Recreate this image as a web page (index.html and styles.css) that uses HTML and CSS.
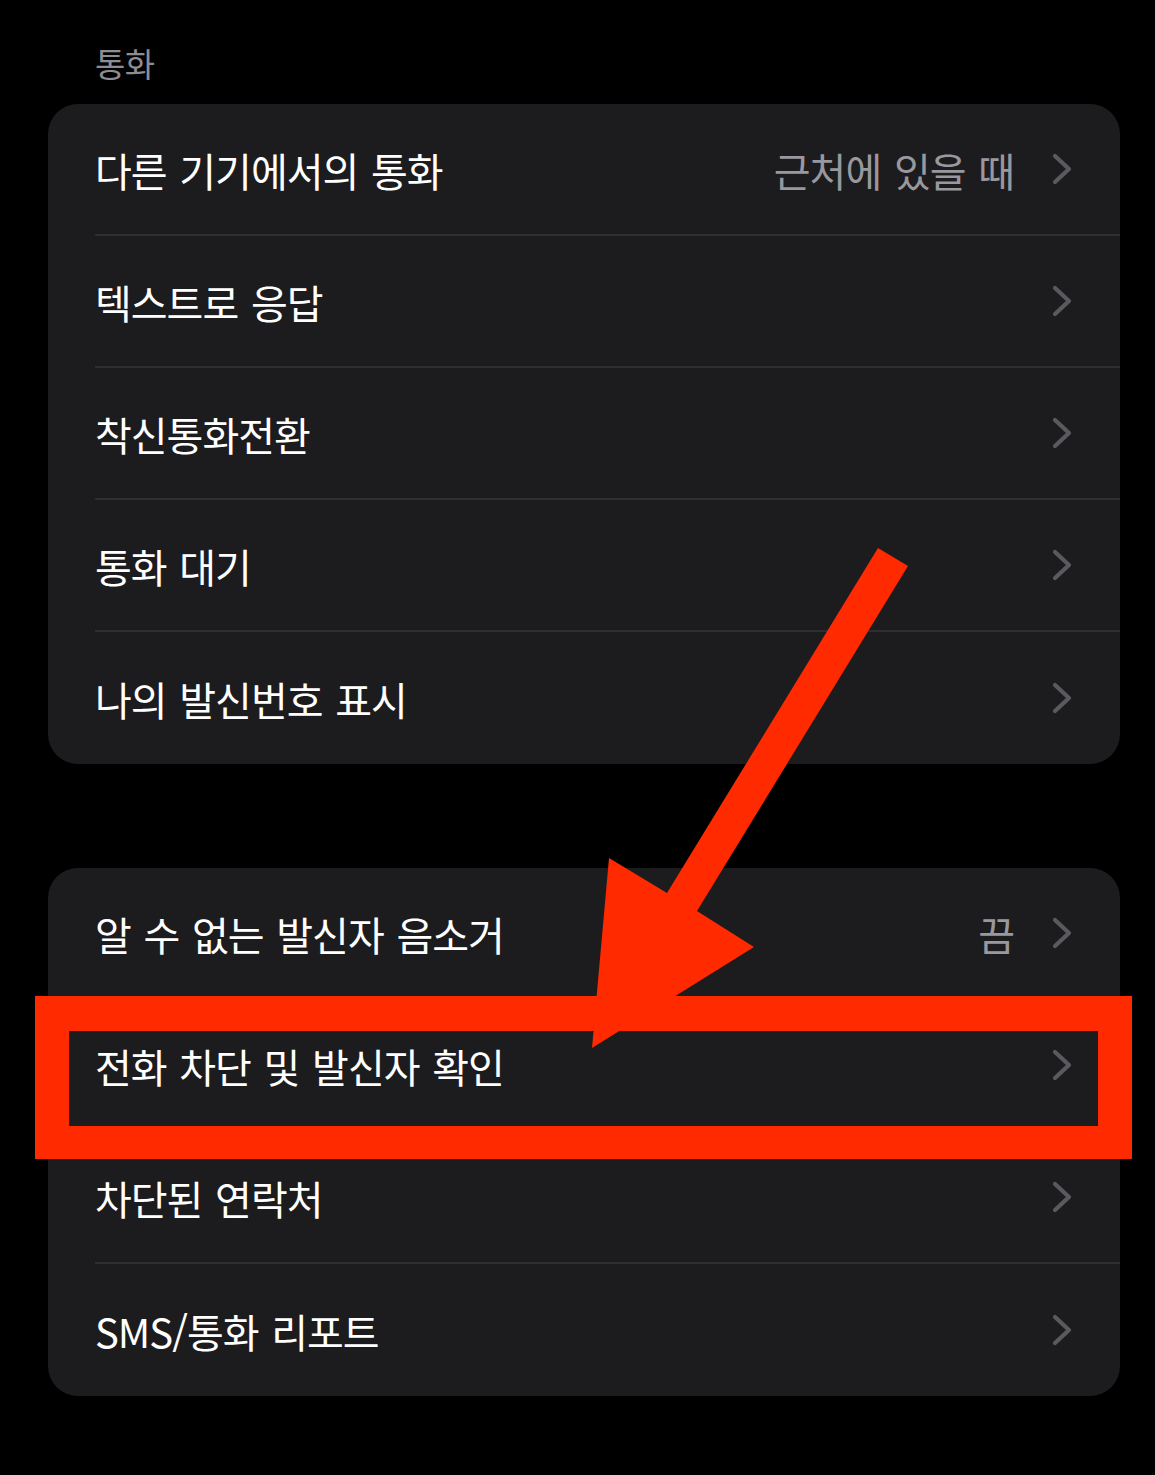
FILE: index.html
```html
<!DOCTYPE html>
<html lang="ko">
<head>
<meta charset="utf-8">
<title>통화 설정</title>
<link rel="stylesheet" href="styles.css">
</head>
<body>
<div class="page">
  <div class="section-title">통화</div>
  <div class="card">
    <div class="row"><span class="label">다른 기기에서의 통화</span><span class="value">근처에 있을 때</span><svg class="chev" viewBox="0 0 20 32"><path d="M3 3 L17 16 L3 29"/></svg></div>
    <div class="row"><span class="label">텍스트로 응답</span><svg class="chev" viewBox="0 0 20 32"><path d="M3 3 L17 16 L3 29"/></svg></div>
    <div class="row"><span class="label">착신통화전환</span><svg class="chev" viewBox="0 0 20 32"><path d="M3 3 L17 16 L3 29"/></svg></div>
    <div class="row"><span class="label">통화 대기</span><svg class="chev" viewBox="0 0 20 32"><path d="M3 3 L17 16 L3 29"/></svg></div>
    <div class="row"><span class="label">나의 발신번호 표시</span><svg class="chev" viewBox="0 0 20 32"><path d="M3 3 L17 16 L3 29"/></svg></div>
  </div>
  <div class="card card-second">
    <div class="row"><span class="label">알 수 없는 발신자 음소거</span><span class="value">끔</span><svg class="chev" viewBox="0 0 20 32"><path d="M3 3 L17 16 L3 29"/></svg></div>
    <div class="row"><span class="label">전화 차단 및 발신자 확인</span><svg class="chev" viewBox="0 0 20 32"><path d="M3 3 L17 16 L3 29"/></svg></div>
    <div class="row"><span class="label">차단된 연락처</span><svg class="chev" viewBox="0 0 20 32"><path d="M3 3 L17 16 L3 29"/></svg></div>
    <div class="row"><span class="label">SMS/통화 리포트</span><svg class="chev" viewBox="0 0 20 32"><path d="M3 3 L17 16 L3 29"/></svg></div>
  </div>
</div>
<div class="highlight"></div>
<svg class="arrow" viewBox="0 0 1155 1475" width="1155" height="1475">
  <polygon points="878,548 908,566 697,911 754,947 592,1048 609,858 667,893"/>
</svg>
</body>
</html>
```
FILE: styles.css
```css
html, body {
  margin: 0;
  padding: 0;
  background: #000;
}
body {
  width: 1155px;
  height: 1475px;
  overflow: hidden;
  position: relative;
  font-family: "Noto Sans CJK KR", "Noto Sans", sans-serif;
  color: #fff;
}
.page {
  padding: 43px 35px 0 48px;
}
.section-title {
  padding-left: 47px;
  height: 40px;
  line-height: 40px;
  font-size: 33px;
  letter-spacing: -0.5px;
  color: #8d8d93;
  margin-bottom: 21px;
}
.card {
  background: #1c1c1e;
  border-radius: 30px;
  overflow: hidden;
}
.card-second {
  margin-top: 104px;
}
.row {
  height: 132px;
  margin-left: 47px;
  padding-right: 48px;
  box-sizing: border-box;
  display: flex;
  align-items: center;
  border-bottom: 2px solid #2e2e30;
}
.row:last-child {
  border-bottom: none;
}
.label {
  font-size: 40px;
  letter-spacing: -1px;
  word-spacing: 2.5px;
  flex: 1;
  white-space: nowrap;
  padding-top: 1px;
}
.value {
  font-size: 40px;
  letter-spacing: -1px;
  word-spacing: 2.5px;
  color: #98989e;
  margin-right: 38px;
  padding-top: 1px;
}
.chev {
  width: 20px;
  height: 32px;
  display: block;
}
.chev path {
  fill: none;
  stroke: #5a5a5e;
  stroke-width: 4.2;
  stroke-linecap: round;
  stroke-linejoin: round;
}
.highlight {
  position: absolute;
  left: 35px;
  top: 996px;
  width: 1097px;
  height: 163px;
  box-sizing: border-box;
  border-style: solid;
  border-color: #ff2a00;
  border-width: 35px 34px 33px 34px;
}
.arrow {
  position: absolute;
  left: 0;
  top: 0;
}
.arrow polygon {
  fill: #ff2a00;
}
```
